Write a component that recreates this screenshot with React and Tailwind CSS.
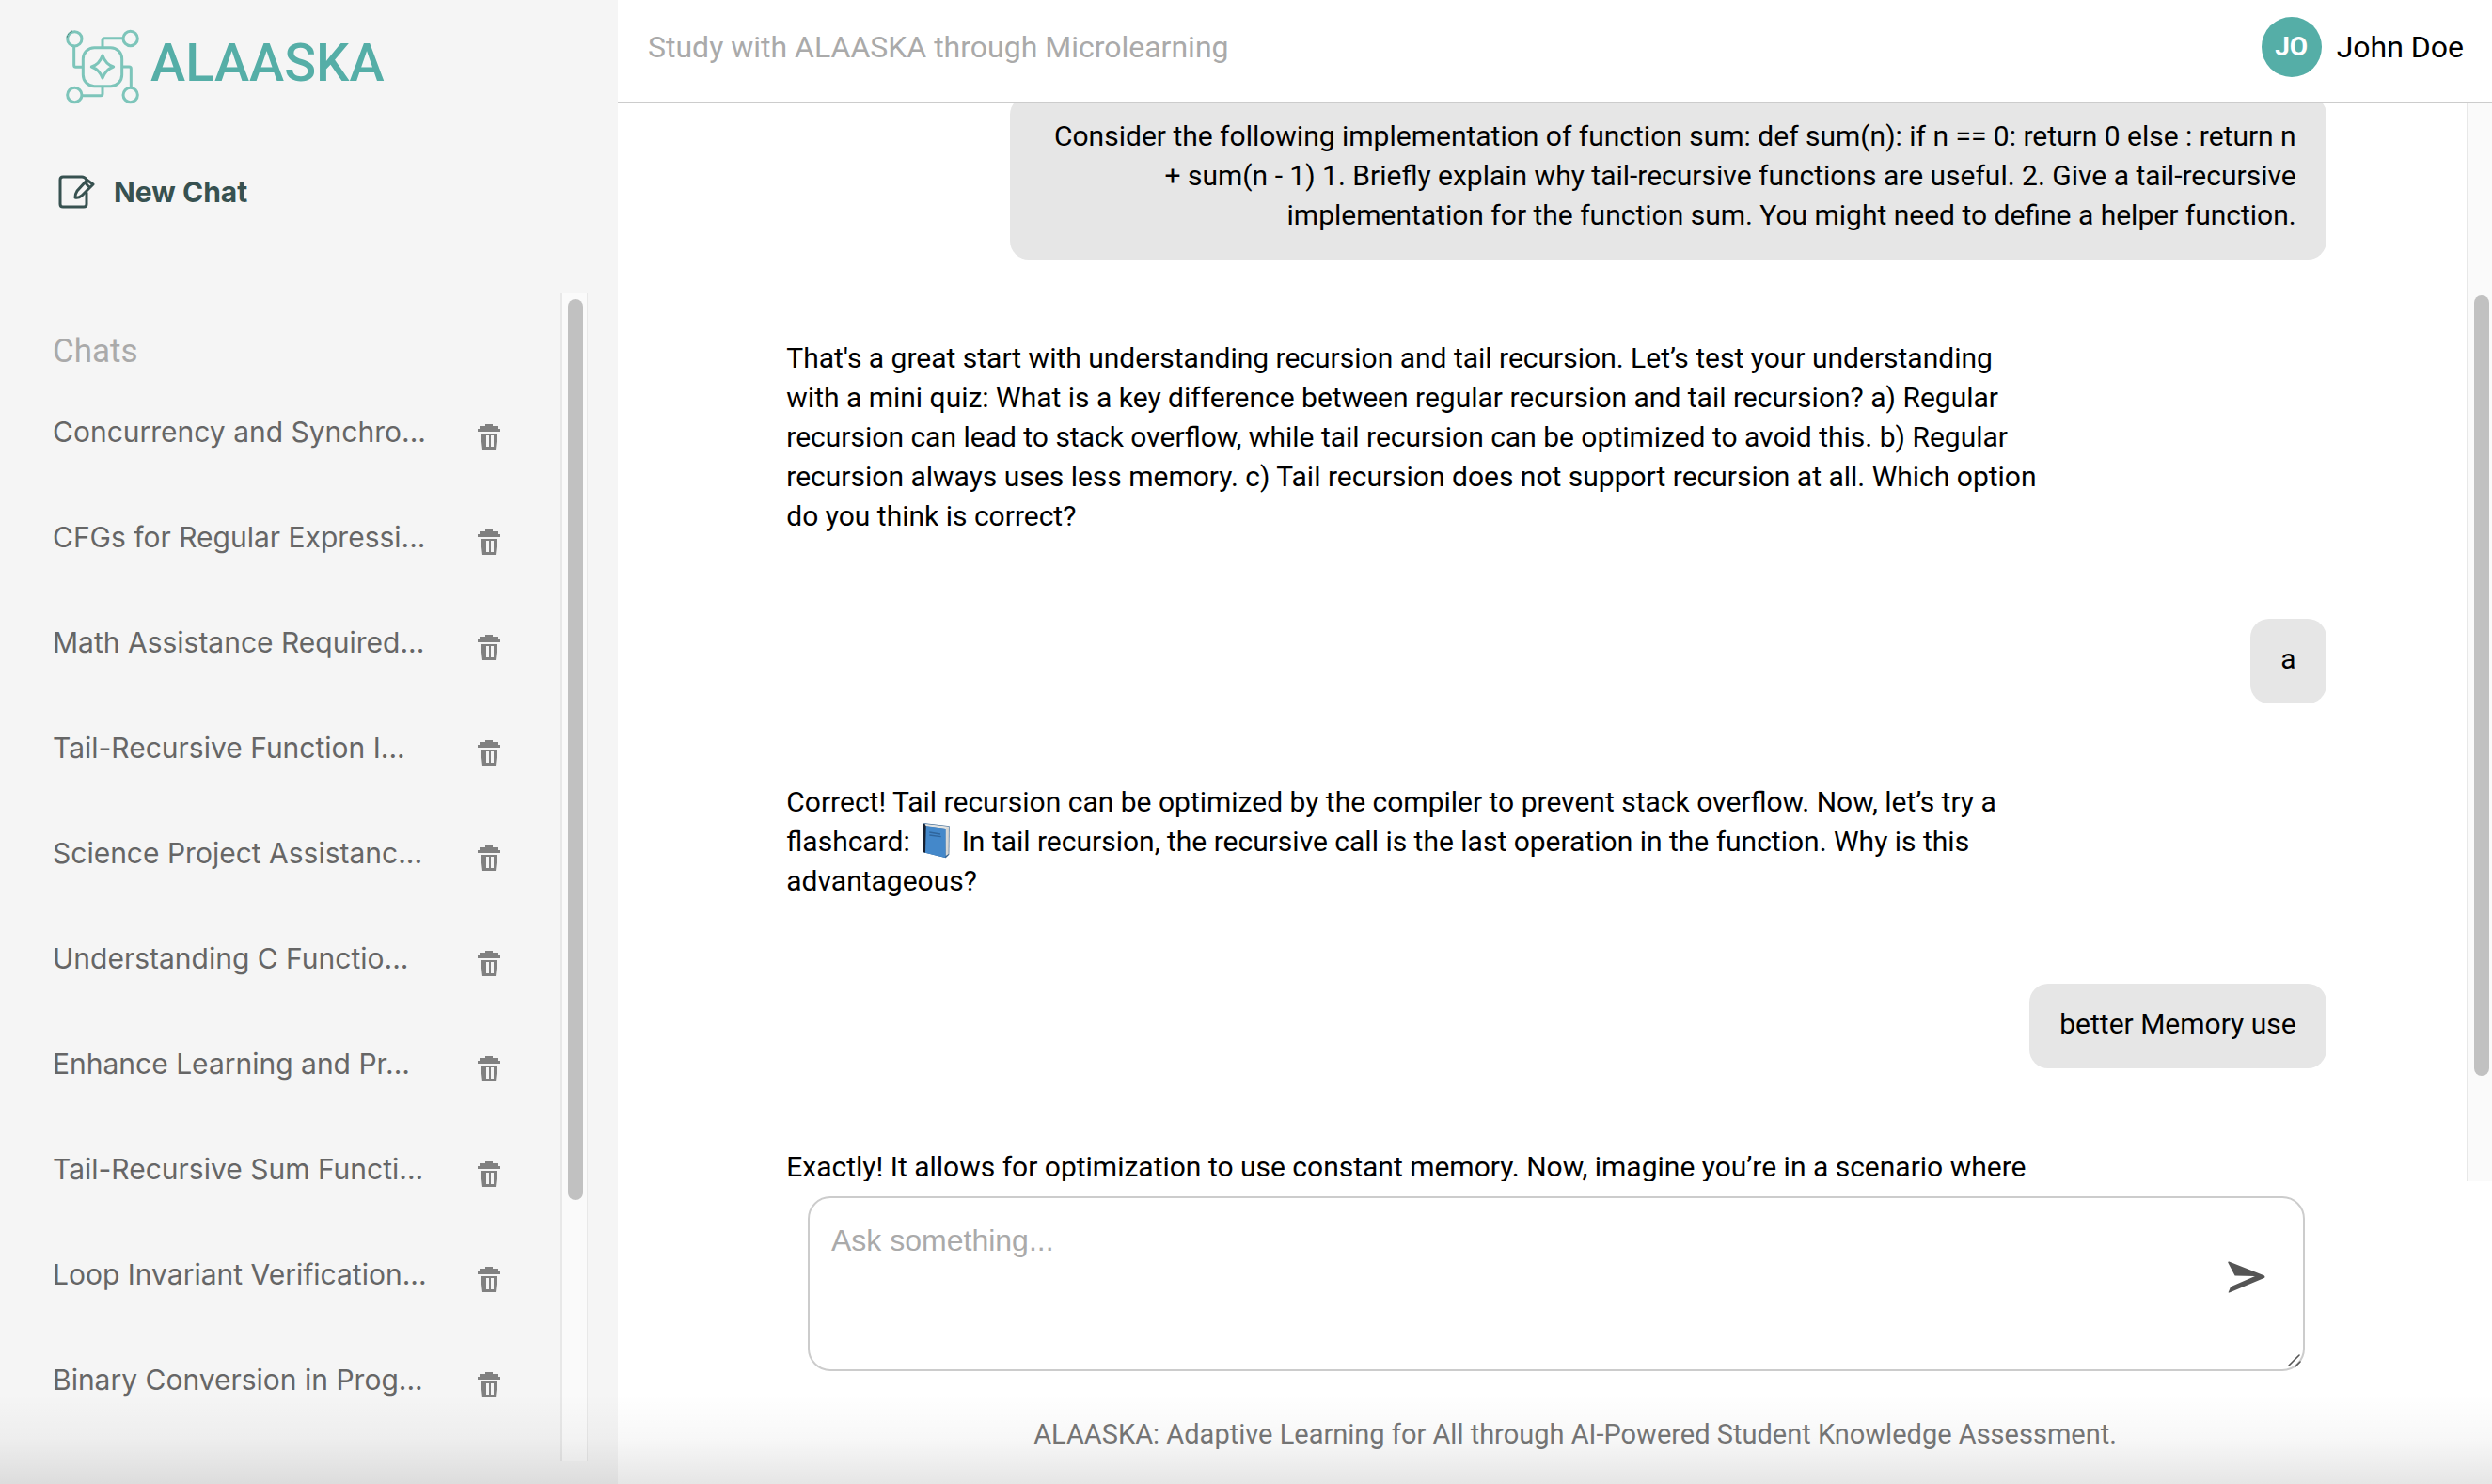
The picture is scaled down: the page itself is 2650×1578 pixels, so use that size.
import React, { useState } from "react";

const chats = [
  "Concurrency and Synchro...",
  "CFGs for Regular Expressi...",
  "Math Assistance Required...",
  "Tail-Recursive Function I...",
  "Science Project Assistanc...",
  "Understanding C Functio...",
  "Enhance Learning and Pr...",
  "Tail-Recursive Sum Functi...",
  "Loop Invariant Verification...",
  "Binary Conversion in Prog...",
];

const messages = [
  {
    from: "user",
    text: "Consider the following implementation of function sum: def sum(n): if n == 0: return 0 else : return n + sum(n - 1) 1. Briefly explain why tail-recursive functions are useful. 2. Give a tail-recursive implementation for the function sum. You might need to define a helper function.",
  },
  {
    from: "bot",
    text: "That's a great start with understanding recursion and tail recursion. Let’s test your understanding with a mini quiz: What is a key difference between regular recursion and tail recursion? a) Regular recursion can lead to stack overflow, while tail recursion can be optimized to avoid this. b) Regular recursion always uses less memory. c) Tail recursion does not support recursion at all. Which option do you think is correct?",
  },
  { from: "user", text: "a" },
  {
    from: "bot",
    text: (
      <>
        Correct! Tail recursion can be optimized by the compiler to prevent stack overflow. Now, let’s try a
        flashcard: <BookIcon /> In tail recursion, the recursive call is the last operation in the function. Why is
        this advantageous?
      </>
    ),
  },
  { from: "user", text: "better Memory use" },
  {
    from: "bot",
    text: "Exactly! It allows for optimization to use constant memory. Now, imagine you’re in a scenario where",
  },
];

function BookIcon() {
  return (
    <svg viewBox="0 0 96 114" className="mx-1 inline-block h-[38px] w-8 align-[-8px]" role="img" aria-label="blue book">
      <path d="M6 2 L14 1 L92 10 L91 101 L80 112 L6 93 Z" fill="#33618f" />
      <path d="M16 3 L90 11 L89 99 L80 105 L79 18 L12 10 Z" fill="#e4e4e2" />
      <path d="M84 14 L84 102 M88 13 L88 100" stroke="#a8a8a8" strokeWidth="1" />
      <path d="M16 9 L80 18 L79 111 L14 95 Z" fill="#4488ca" />
      <path d="M6 3 L11 2 L17 9 L15 95 L6 92 Z" fill="#17202f" />
      <path d="M28 30 L63 36 M28 39 L65 44" stroke="#2f659c" strokeWidth="4" />
    </svg>
  );
}

function Logo() {
  return (
    <svg
      viewBox="54 30 246 246"
      className="size-[82px] shrink-0"
      fill="none"
      stroke="#7dc5ba"
      strokeWidth="9"
      strokeLinecap="round"
      strokeLinejoin="round"
      aria-hidden="true"
    >
      <circle cx="88" cy="64" r="23" />
      <circle cx="266" cy="63" r="23" />
      <circle cx="88" cy="243" r="23" />
      <circle cx="266" cy="243" r="23" />
      <rect x="115" y="92" width="124" height="123" rx="36" />
      <path d="M177 117 C184 137 193 147 212 153 C193 160 184 170 177 189 C170 170 161 160 142 153 C161 147 170 137 177 117 Z" />
      <path d="M86 88 V148 Q86 154 92 154 H113" />
      <path d="M177 90 V68 Q177 62 183 62 H242" />
      <path d="M241 153 H262 Q268 153 268 159 V218" />
      <path d="M177 217 V239 Q177 245 171 245 H112" />
      <path d="M64 58 Q68 44 80 39" stroke="#33534f" strokeWidth="2" strokeDasharray="3 5" />
    </svg>
  );
}

function NewChatIcon() {
  return (
    <svg
      viewBox="0 0 40 38"
      className="h-[38px] w-10 shrink-0"
      fill="none"
      stroke="#375150"
      strokeWidth="3"
      strokeLinejoin="round"
      strokeLinecap="round"
      aria-hidden="true"
    >
      <path d="M31 6 Q29 3 26 3 H6 Q3 3 3 6 V32 Q3 35 6 35 H28 Q31 35 31 32 V20" />
      <path d="M31 6 L38 11 L26 23 Q22 26 19 25 Q19 21 21 18 L31 7 V11 L34 14" />
    </svg>
  );
}

function TrashIcon() {
  return (
    <svg viewBox="0 0 24 28" className="h-7 w-6" aria-hidden="true">
      <path
        fill="#808080"
        fillRule="evenodd"
        d="M8 0H16V2H22V5H24V8H0V5H2V2H8Z M3 10H21L19 27H5Z M9 12V24H12V12Z M14 12V24H17V12Z"
      />
    </svg>
  );
}

function SendIcon() {
  return (
    <svg viewBox="0 0 116 98" className="h-[34px] w-10" aria-hidden="true">
      <path
        fill="#555555"
        d="M4 1 L112 44 Q117 48 112 52 L5 97 Q0 98 3 93 L9 79 L84 46 L22 45 L1 5 Q0 0 4 1 Z"
      />
    </svg>
  );
}

function Scrollbar({ thumb, className }) {
  return (
    <div className={"shrink-0 border-l-2 border-[#e8e8e8] bg-[#fafafa] " + className} aria-hidden="true">
      <div className={"ml-1.5 w-4 rounded-full bg-[#c1c1c1] " + thumb} />
    </div>
  );
}

function Sidebar() {
  return (
    <aside className="flex w-[657px] shrink-0 flex-col bg-[#f5f5f5] pb-6">
      <div className="flex items-center gap-2.5 pt-[30px] pl-[68px]">
        <Logo />
        <h1 className="pb-2 text-[56px] leading-none font-medium text-[#55aea7]">ALAASKA</h1>
      </div>
      <button type="button" className="mt-[73px] flex items-center gap-5 self-start pl-[61px]">
        <NewChatIcon />
        <span className="font-[Inter] text-[30px] leading-[38px] font-bold text-[#375150]">New Chat</span>
      </button>
      <div className="mt-[89px] mr-8 flex min-h-0 flex-1">
        <nav className="min-w-0 flex-1 overflow-hidden pl-14" aria-label="Chats">
          <h2 className="pt-10 pb-[23px] text-[35px] leading-[44px] text-[#aaaaaa]">Chats</h2>
          <ul>
            {chats.map((c) => (
              <li key={c} className="flex h-28 items-start justify-between pr-16">
                <a href="#chat" className="font-[Inter] text-[30px] leading-[80px] whitespace-nowrap text-[#666666]">
                  {c}
                </a>
                <button type="button" aria-label={"Delete " + c} className="pt-8">
                  <TrashIcon />
                </button>
              </li>
            ))}
          </ul>
        </nav>
        <Scrollbar className="w-[29px] border-r pt-1.5" thumb="h-[958px]" />
      </div>
    </aside>
  );
}

function Message({ from, text }) {
  const user = from === "user";
  return (
    <div className={user ? "flex justify-end" : "flex justify-start"}>
      <p
        className={
          "box-content max-w-4/5 rounded-[20px] px-8 pt-[22px] pb-[26px] text-[30px] leading-[42px] text-black " +
          (user ? "bg-[#e6e6e6] text-right" : "text-left")
        }
      >
        {text}
      </p>
    </div>
  );
}

export default function App() {
  const [draft, setDraft] = useState("");
  return (
    <div className="relative flex h-screen overflow-hidden bg-white font-[Roboto,sans-serif]">
      <Sidebar />
      <main className="flex min-w-0 flex-1 flex-col">
        <header className="flex h-[110px] shrink-0 items-center justify-between border-b-2 border-[#cccccc] pr-[30px] pb-2 pl-8">
          <p className="text-[32px] text-[#aaaaaa]">Study with ALAASKA through Microlearning</p>
          <div className="flex items-center gap-4">
            <span className="flex size-16 items-center justify-center rounded-full bg-[#55aea7] text-[28px] font-bold text-white">
              JO
            </span>
            <span className="text-[32px] text-black">John Doe</span>
          </div>
        </header>
        <section className="flex min-h-0 flex-1" aria-label="Conversation">
          <div className="min-w-0 flex-1 overflow-hidden pr-0.5">
            <div className="mx-auto -mt-2 flex w-[85%] flex-col gap-[62px]">
              {messages.map((m, i) => (
                <Message key={i} from={m.from} text={m.text} />
              ))}
            </div>
          </div>
          <Scrollbar className="w-[27px] pt-[204px]" thumb="h-[830px]" />
        </section>
        <footer className="shrink-0 pt-4 pb-8 pl-[3px]">
          <form className="relative mx-auto w-4/5" onSubmit={(e) => e.preventDefault()}>
            <textarea
              aria-label="Ask something"
              placeholder="Ask something..."
              value={draft}
              onChange={(e) => setDraft(e.target.value)}
              className="block h-[186px] w-full resize-none rounded-3xl border-2 border-[#cccccc] bg-white py-6 pr-32 pl-[23px] font-['Liberation_Sans',sans-serif] text-[32px] leading-[42px] text-black outline-none placeholder:text-[#aaaaaa]"
            />
            <button type="submit" aria-label="Send" className="absolute top-[69px] right-[42px]">
              <SendIcon />
            </button>
            <svg
              viewBox="0 0 14 14"
              className="absolute right-1 bottom-1 size-3.5"
              stroke="#555555"
              strokeWidth="1.6"
              strokeLinecap="round"
              aria-hidden="true"
            >
              <path d="M1 12 L12 1 M8 13 L13 8" />
            </svg>
          </form>
          <p className="mt-[46px] pl-10 text-center text-[29px] leading-[42px] text-[#777777]">
            ALAASKA: Adaptive Learning for All through AI-Powered Student Knowledge Assessment.
          </p>
        </footer>
      </main>
      <div className="pointer-events-none absolute inset-x-0 bottom-0 h-24 bg-linear-to-t from-black/10 via-black/3 to-transparent" />
    </div>
  );
}
